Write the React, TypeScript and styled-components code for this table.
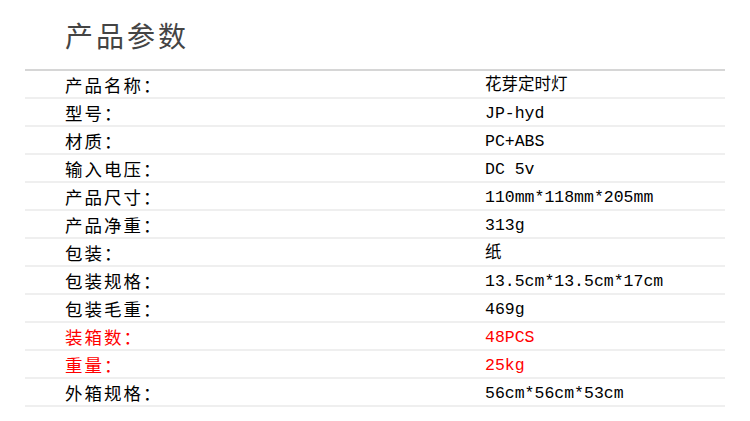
import React from 'react'
import styled, { createGlobalStyle } from 'styled-components'

const GlobalStyle = createGlobalStyle`
	html, body {
		margin: 0;
		padding: 0;
		background: #ffffff;
	}
	body {
		font-family: 'Noto Sans CJK SC', sans-serif;
	}
`

const Page = styled.div`
	width: 750px;
	height: 421px;
	padding: 0 25px;
	box-sizing: border-box;
	overflow: hidden;
`

const Title = styled.h1`
	margin: 0;
	height: 71px;
	padding: 17px 0 0 40px;
	box-sizing: border-box;
	font-family: 'Noto Sans CJK SC', sans-serif;
	font-size: 28px;
	font-weight: 400;
	letter-spacing: 3px;
	line-height: 36px;
	color: #444444;
	border-bottom: 2px solid #d6d6d6;
`

const Table = styled.div`
	display: flex;
	flex-direction: column;
`

const Row = styled.div<{ $red?: boolean }>`
	display: grid;
	grid-template-columns: 460px 1fr;
	align-items: center;
	height: 26px;
	border-bottom: 2px solid #efefef;
	color: ${(p) => (p.$red ? '#ff0000' : '#000000')};
`

const Label = styled.div`
	padding-left: 40px;
	font-family: 'Noto Sans CJK SC', sans-serif;
	font-size: 17.5px;
	letter-spacing: 2px;
	line-height: 26px;
`

const Value = styled.div`
	font-family: 'Liberation Mono', 'Noto Sans CJK SC', monospace;
	font-size: 16.5px;
	letter-spacing: 0;
	line-height: 26px;
	padding-top: 2px;
`

const specs = [
	{ label: '产品名称：', value: '花芽定时灯' },
	{ label: '型号：', value: 'JP-hyd' },
	{ label: '材质：', value: 'PC+ABS' },
	{ label: '输入电压：', value: 'DC 5v' },
	{ label: '产品尺寸：', value: '110mm*118mm*205mm' },
	{ label: '产品净重：', value: '313g' },
	{ label: '包装：', value: '纸' },
	{ label: '包装规格：', value: '13.5cm*13.5cm*17cm' },
	{ label: '包装毛重：', value: '469g' },
	{ label: '装箱数：', value: '48PCS', red: true },
	{ label: '重量：', value: '25kg', red: true },
	{ label: '外箱规格：', value: '56cm*56cm*53cm' },
]

export default function App() {
	return (
		<Page>
			<GlobalStyle />
			<Title>产品参数</Title>
			<Table>
				{specs.map((s) => (
					<Row key={s.label} $red={s.red}>
						<Label>{s.label}</Label>
						<Value>{s.value}</Value>
					</Row>
				))}
			</Table>
		</Page>
	)
}
